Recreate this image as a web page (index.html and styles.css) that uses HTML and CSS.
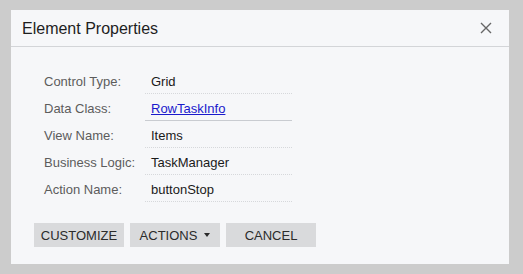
FILE: index.html
```html
<!DOCTYPE html>
<html lang="en">
<head>
    <meta charset="UTF-8">
    <title>Element Properties</title>
    <link rel="stylesheet" href="styles.css">
</head>
<body>
    <div class="dialog">
        <div class="dialog-header">
            <div class="dialog-title">Element Properties</div>
            <div class="close-button">
                <svg width="12" height="12" viewBox="0 0 12 12">
                    <path d="M1 1 L11 11 M11 1 L1 11" stroke="#666" stroke-width="1.4" fill="none"/>
                </svg>
            </div>
        </div>
        <div class="dialog-body">
            <div class="prop-row">
                <div class="prop-label">Control Type:</div>
                <div class="prop-value">Grid</div>
            </div>
            <div class="prop-row">
                <div class="prop-label">Data Class:</div>
                <div class="prop-value link-value"><a href="#">RowTaskInfo</a></div>
            </div>
            <div class="prop-row">
                <div class="prop-label">View Name:</div>
                <div class="prop-value">Items</div>
            </div>
            <div class="prop-row">
                <div class="prop-label">Business Logic:</div>
                <div class="prop-value">TaskManager</div>
            </div>
            <div class="prop-row">
                <div class="prop-label">Action Name:</div>
                <div class="prop-value">buttonStop</div>
            </div>
        </div>
        <div class="dialog-footer">
            <button class="btn">CUSTOMIZE</button>
            <button class="btn">ACTIONS <span class="caret"></span></button>
            <button class="btn">CANCEL</button>
        </div>
    </div>
</body>
</html>
```

FILE: styles.css
```css
html,
body {
    margin: 0;
    padding: 0;
    background-color: #cccccc;
    font-family: "Liberation Sans", Arial, sans-serif;
}

.dialog {
    margin: 10px 0 0 11px;
    width: 498px;
    height: 254px;
    background-color: #f6f7f9;
    display: flex;
    flex-direction: column;
}

.dialog-header {
    height: 36px;
    border-bottom: 1px solid #d3d5d8;
    display: flex;
    align-items: center;
    justify-content: space-between;
    padding: 0 17px 0 11px;
}

.dialog-title {
    font-size: 16px;
    color: #1e1e1e;
    padding-top: 2px;
}

.close-button {
    width: 12px;
    height: 12px;
    display: flex;
}

.dialog-body {
    padding: 20px 0 0 33px;
}

.prop-row {
    display: flex;
    font-size: 13px;
    line-height: 16px;
}

.prop-label {
    width: 101px;
    color: #5c5c5c;
    padding-top: 7px;
}

.prop-value {
    width: 141px;
    padding: 7px 0 3px 6px;
    color: #1a1a1a;
    border-bottom: 1px dotted #d6d8db;
}

.link-value {
    border-bottom: 1px solid #c9ccd1;
}

.link-value a {
    color: #1a1acc;
}

.dialog-footer {
    display: flex;
    gap: 6px;
    padding: 21px 0 0 23px;
}

.btn {
    width: 90px;
    height: 24px;
    border: none;
    background-color: #d9dadc;
    color: #2b2b2b;
    font-family: "Liberation Sans", Arial, sans-serif;
    font-size: 13px;
    padding: 0;
    display: flex;
    align-items: center;
    justify-content: center;
}

.caret {
    display: inline-block;
    margin-left: 7px;
    border-left: 3.5px solid transparent;
    border-right: 3.5px solid transparent;
    border-top: 4px solid #2b2b2b;
}
```
